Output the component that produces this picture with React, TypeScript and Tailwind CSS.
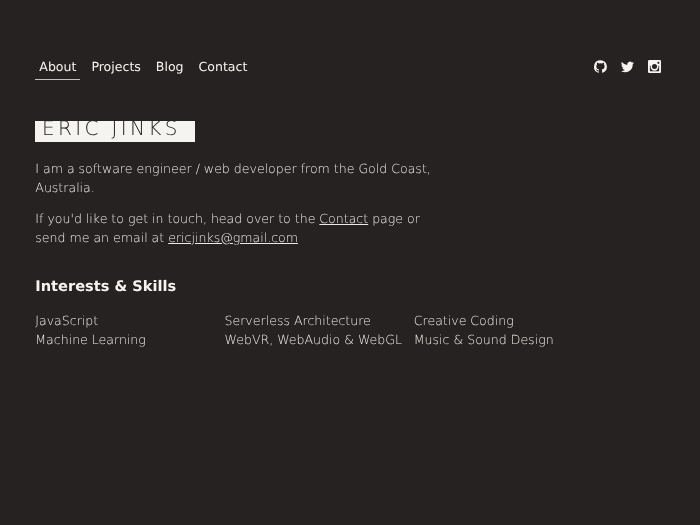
import React from "react";

const skills = [
  ["JavaScript", "Machine Learning"],
  ["Serverless Architecture", "WebVR, WebAudio & WebGL"],
  ["Creative Coding", "Music & Sound Design"],
];

export default function App() {
  return (
    <div className="min-h-screen bg-[#272222] font-['DejaVu_Sans',sans-serif] text-[#f5f4f0] [text-rendering:geometricPrecision]">
      <div className="px-[35px] pt-[53px] will-change-transform">
        <header className="flex h-[27px] items-center justify-between">
          <nav className="flex h-full gap-[7px] text-[12.55px] leading-[27px]">
            <a className="border-b border-[#c5bfbd] pl-[4.3px] pr-[3.7px]">About</a>
            <a className="pl-[4.3px] pr-[3.7px]">Projects</a>
            <a className="pl-[4.3px] pr-[3.7px]">Blog</a>
            <a className="pl-[4.3px] pr-[3.7px]">Contact</a>
          </nav>
          <div className="flex items-center gap-[14px] pr-1">
            <svg width="13" height="13" viewBox="0 0 16 16" fill="currentColor">
              <path d="M8 .2a8 8 0 0 0-2.500 15.600c.4.1.5-.2.5-.4v-1.500c-2.200.5-2.700-.9-2.700-.9-.4-.9-.9-1.200-.9-1.200-.7-.5.1-.5.1-.5.8.1 1.200.8 1.200.8.7 1.200 1.900.9 2.300.7.1-.5.3-.9.5-1.100-1.800-.2-3.600-.9-3.600-4 0-.9.3-1.600.8-2.100-.1-.2-.4-1 .1-2.100 0 0 .7-.2 2.200.8a7.700 7.700 0 0 1 4 0c1.500-1 2.200-.8 2.200-.8.4 1.100.2 1.900.1 2.100.5.6.8 1.300.8 2.100 0 3.100-1.900 3.700-3.700 3.900.3.3.6.8.6 1.500v2.200c0 .2.1.5.6.4A8 8 0 0 0 8 .2z" />
            </svg>
            <svg width="13" height="13" viewBox="0 0 16 16" fill="currentColor">
              <path d="M16 3.500c-.6.3-1.200.4-1.900.5.7-.4 1.200-1 1.400-1.800-.6.4-1.300.6-2.100.8a3.300 3.300 0 0 0-5.600 3C5.100 5.900 2.700 4.600 1.100 2.600a3.300 3.300 0 0 0 1 4.400c-.5 0-1-.2-1.500-.4 0 1.600 1.100 2.900 2.600 3.200-.5.1-1 .2-1.500.1.4 1.300 1.600 2.300 3.100 2.300A6.600 6.600 0 0 1 0 13.500 9.300 9.300 0 0 0 14.400 5.200c.6-.5 1.200-1 1.600-1.700z" />
            </svg>
            <svg width="13" height="13" viewBox="0 0 16 16" fill="currentColor" fillRule="evenodd">
              <path d="M1.500 0h13A1.500 1.500 0 0 1 16 1.500v13a1.500 1.500 0 0 1-1.500 1.500h-13A1.500 1.500 0 0 1 0 14.500v-13A1.500 1.500 0 0 1 1.500 0zM11.700 2.200v2.400h2.200V2.200zM2.300 7v6.200a.5.5 0 0 0 .5.5h10.400a.5.5 0 0 0 .5-.5V7h-1a4.900 4.900 0 1 1-9.400 0zM8 4.900a3.100 3.100 0 1 0 0 6.200a3.100 3.100 0 1 0 0-6.200z" />
            </svg>
          </div>
        </header>
        <main className="pt-[41px] font-extralight">
          <h1 className="h-[21px] w-[160px] overflow-hidden bg-[#f5f4f0] pl-[7px] text-[20px] leading-[15px] tracking-[3.35px] text-[#272222]">ERIC JINKS</h1>
          <div className="mt-[17px] w-[420px] pl-[0.3px] text-[12.56px] leading-[19px] text-[#ece9e6]">
            <p>I am a software engineer / web developer from the Gold Coast, Australia.</p>
            <p className="mt-[12px]">If you'd like to get in touch, head over to the <a className="underline">Contact</a> page or<br />send me an email at <a className="underline">ericjinks@gmail.com</a></p>
          </div>
          <h2 className="mt-[30px] pl-[0.3px] text-[14.6px] font-bold leading-[20px]">Interests &amp; Skills</h2>
          <div className="mt-[14px] grid w-[568px] grid-cols-3 whitespace-nowrap pl-[0.3px] text-[12.56px] leading-[19px] text-[#ece9e6]">
            {skills.map((c) => <div key={c[0]}>{c.map((s) => <p key={s}>{s}</p>)}</div>)}
          </div>
        </main>
      </div>
    </div>
  );
}
